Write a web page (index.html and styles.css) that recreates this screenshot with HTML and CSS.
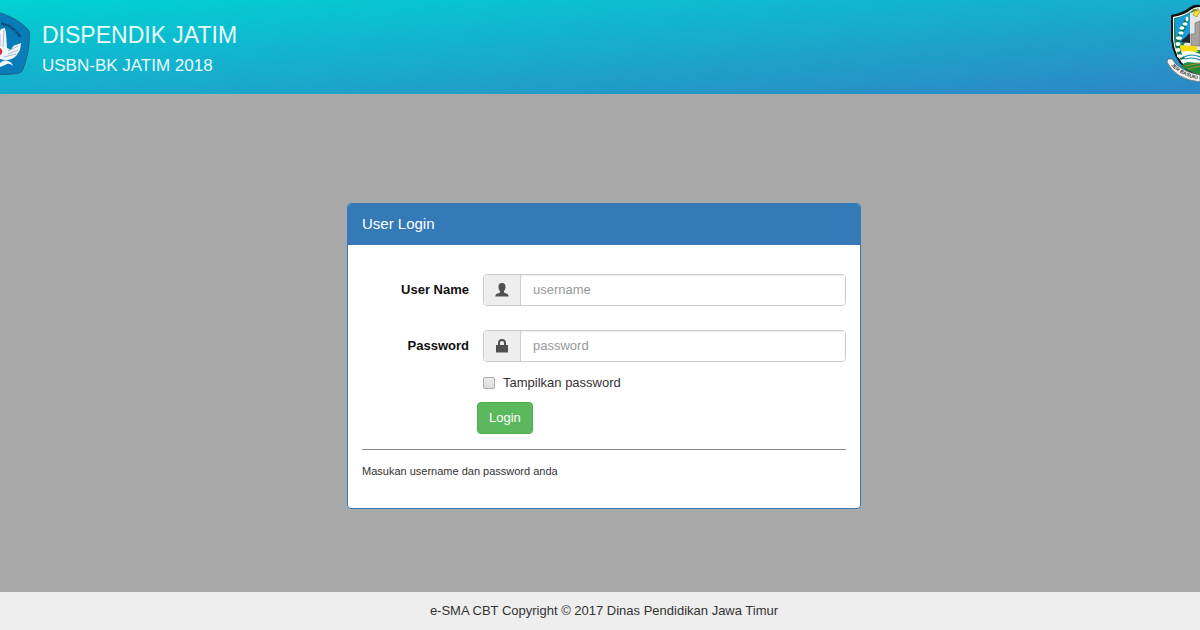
FILE: index.html
```html
<!DOCTYPE html>
<html lang="id">
<head>
<meta charset="utf-8">
<meta name="viewport" content="width=device-width, initial-scale=1">
<title>User Login</title>
<link rel="stylesheet" href="styles.css">
</head>
<body>
<header class="site-header">
  <svg class="logo-left" viewBox="0 0 31 76" aria-hidden="true">
    <path d="M-3 12.500L2 13.500Q18 19 27.500 29Q30 31 29.500 35Q29 55 22.500 70Q21 73 17 73.500Q7 75 -3 74.500Z" fill="#087cb8" stroke="#23617f"/>
    <path d="M0 31L1 29L5 28L6 33L7 48L11 50Q13 45 16 45L21 43L20 50L16 56Q10 62 0 59Z" fill="#f2f5fa"/>
    <path d="M4 30L3 47M0 34V46M8 51L18 46M8 54L18 50M4 57L16 54" fill="none" stroke="#899cba" stroke-width=".7"/>
    <path d="M0 48Q3 50 2 53Q1 55 0 55Z" fill="#e22636"/>
    <path d="M0 63Q4 59 8 61Q12 62 13 66Q9 62 5 65L0 67Z" fill="#f2f7fb"/>
    <path id="motto" d="M1 25Q13 26 22 42" fill="none"/>
    <text class="logo-text motto" fill="#092b43"><textPath href="#motto">HANDAYANI</textPath></text>
  </svg>
  <div class="brand">
    <h1 class="brand-title">DISPENDIK JATIM</h1>
    <p class="brand-subtitle">USBN-BK JATIM 2018</p>
  </div>
  <svg class="logo-right" viewBox="0 0 34 84" aria-hidden="true">
    <path d="M5 15Q17 13 24 7Q28 4 34 5V78L20 70Q6 57 5 39Z" fill="#111"/>
    <path d="M7 17Q19 15 26 9Q29 7 34 7V76L21 68Q8 56 7 39Z" fill="#fff"/>
    <path d="M8 18Q20 16 28 9L34 10V75L21 67Q9 55 8 39Z" fill="#168b50"/>
    <path d="M9 19Q19 16 24 13V34L16 43L10 46Z" fill="#189cdf"/>
    <path d="M24 13L34 10V50H15L21 39L24 34Z" fill="#e4e7e6"/>
    <path d="M14 42L24 33V43Z" fill="#202a2d"/>
    <path d="M25 34H29V23L34 21V46H25Z" fill="#aaa19f" stroke="#777" stroke-width=".7"/>
    <path d="M32 8L33.500 12L31 17L27 15L29 12L26 10L31 11Z" fill="#ffe12b" stroke="#8e7614" stroke-width=".5"/>
    <path d="M12 45L30 46L32 52H12Z" fill="#f4dd13"/>
    <path d="M14 52Q24 49 34 54V63L19 62Z" fill="#f6faf8"/>
    <path d="M18 57Q26 53 34 57M17 60Q25 56 34 60" fill="none" stroke="#168aaf" stroke-width="1.200"/>
    <path d="M14 66Q25 60 34 65V76L21 70Z" fill="#258838"/>
    <path d="M20 66L34 63M22 69L34 66" stroke="#ad8927" stroke-width="1"/>
    <path d="M22 18L19 23L17 29L14 34L12 40L12 48L14 55L19 62" fill="none" stroke="#08754b" stroke-width="4"/>
    <g fill="#fff"><ellipse cx="21" cy="19" rx="1.500" ry="2.500"/><ellipse cx="19" cy="24" rx="2.500" ry="1.800"/><ellipse cx="16" cy="28" rx="2.500" ry="1.800"/><ellipse cx="15" cy="33" rx="2.700" ry="1.800"/><ellipse cx="13" cy="38" rx="3" ry="1.800"/><ellipse cx="12" cy="44" rx="2.500" ry="2"/><ellipse cx="12" cy="50" rx="2.500" ry="2"/><ellipse cx="14" cy="56" rx="3" ry="1.800"/><ellipse cx="18" cy="61" rx="3" ry="2"/></g>
    <path d="M2 59L6 59Q13 71 34 75V82Q9 79 1 62Z" fill="#f5f1ec" stroke="#62616c" stroke-width=".7"/>
    <path id="ribbon" d="M3 63Q13 76 35 80" fill="none"/>
    <text class="logo-text" fill="#343139"><textPath href="#ribbon" startOffset="3">JER BASUKI</textPath></text>
  </svg>
</header>
<main class="main">
  <section class="panel">
    <h2 class="panel-heading">User Login</h2>
    <form class="panel-body">
      <div class="form-row">
        <label class="form-label" for="username">User Name</label>
        <div class="input-group">
          <span class="addon"><svg class="icon" viewBox="0 0 14 14" aria-hidden="true"><path d="M7 0C9.500 0 10.500 1.500 10.500 4C10.500 6 9.800 7.300 9 8V9.500L12.500 11Q13.700 11.600 13.700 13.500H.3Q.3 11.600 1.500 11L5 9.500V8C4.200 7.300 3.500 6 3.500 4C3.500 1.500 4.500 0 7 0Z"/></svg></span>
          <input class="text-input" id="username" type="text" placeholder="username">
        </div>
      </div>
      <div class="form-row">
        <label class="form-label" for="password">Password</label>
        <div class="input-group">
          <span class="addon"><svg class="icon" viewBox="0 0 14 14" aria-hidden="true"><path fill-rule="evenodd" d="M1 6H3V4Q3 0 7 0Q11 0 11 4V6H13V13.500H1ZM5 6H9V4Q9 2 7 2Q5 2 5 4Z"/></svg></span>
          <input class="text-input" id="password" type="password" placeholder="password">
        </div>
      </div>
      <div class="check-row">
        <input class="checkbox" id="show" type="checkbox">
        <label for="show">Tampilkan password</label>
      </div>
      <button class="login-button" type="button">Login</button>
      <p class="hint">Masukan username dan password anda</p>
    </form>
  </section>
</main>
<footer class="site-footer">e-SMA CBT Copyright © 2017 Dinas Pendidikan Jawa Timur</footer>
</body>
</html>
```
FILE: styles.css
```css
* { box-sizing: border-box; }
body {
  margin: 0;
  min-height: 100vh;
  display: flex;
  flex-direction: column;
  background: #a9a9a9;
  color: #333;
  font: 13px/20px "Liberation Sans", Arial, sans-serif;
}
h1, h2, p { margin: 0; font-weight: 400; }
.site-header {
  display: flex;
  align-items: flex-start;
  height: 94px;
  background: linear-gradient(to bottom right, #00d2d3, #2e86c5);
  color: #e8fcff;
}
.logo-left { width: 31px; height: 76px; }
.logo-right { width: 34px; height: 84px; margin-left: auto; }
.logo-text { font: bold 5px "Liberation Sans", Arial, sans-serif; }
.motto { font-size: 4px; }
.brand { padding: 20px 0 0 11px; }
.brand-title { font-size: 23px; line-height: 30px; }
.brand-subtitle { font-size: 17px; line-height: 32px; }
.main {
  flex: 1;
  display: flex;
  align-items: flex-start;
  justify-content: center;
  padding: 109px 16px 32px 24px;
}
.panel {
  width: 100%;
  max-width: 514px;
  background: #fff;
  border: 1px solid #337ab7;
  border-radius: 4px;
  overflow: hidden;
}
.panel-heading {
  padding: 10px 14px 11px;
  background: #337ab7;
  color: #fff;
  font-size: 15px;
  line-height: 20px;
}
.panel-body { padding: 29px 14px 27px; }
.form-row {
  display: flex;
  align-items: center;
  gap: 14px;
  margin-bottom: 24px;
}
.form-label {
  width: 107px;
  color: #111;
  font-weight: 700;
  text-align: right;
}
.input-group {
  flex: 1;
  display: flex;
  height: 32px;
  border: 1px solid #ccc;
  border-radius: 4px;
  overflow: hidden;
}
.addon {
  width: 37px;
  display: flex;
  align-items: center;
  justify-content: center;
  background: #eee;
  border-right: 1px solid #ccc;
}
.icon { width: 14px; height: 14px; fill: #505050; }
.text-input {
  flex: 1;
  min-width: 0;
  padding: 0 12px;
  border: 0;
  background: #fff;
  box-shadow: inset 0 1px 1px #eee;
  color: #555;
  font: inherit;
}
.text-input::placeholder { color: #999; opacity: 1; }
.check-row {
  display: flex;
  align-items: center;
  gap: 8px;
  margin: -13px 0 9px 121px;
}
.checkbox {
  appearance: none;
  width: 12px;
  height: 12px;
  margin: 0;
  border: 1px solid #aaa;
  border-radius: 2px;
  background: linear-gradient(#eee, #ddd);
}
.checkbox:checked { background: #337ab7; }
.login-button {
  display: block;
  height: 32px;
  margin: 0 0 15px 115px;
  padding: 0 11px;
  border: 1px solid #4cae4c;
  border-radius: 4px;
  background: #5cb85c;
  color: #fff;
  font: inherit;
}
.hint {
  padding: 11px 0 0;
  border-top: 1px solid #888;
  font-size: 11px;
}
.site-footer {
  padding: 9px 0 9px 8px;
  background: #eee;
  text-align: center;
}
```
